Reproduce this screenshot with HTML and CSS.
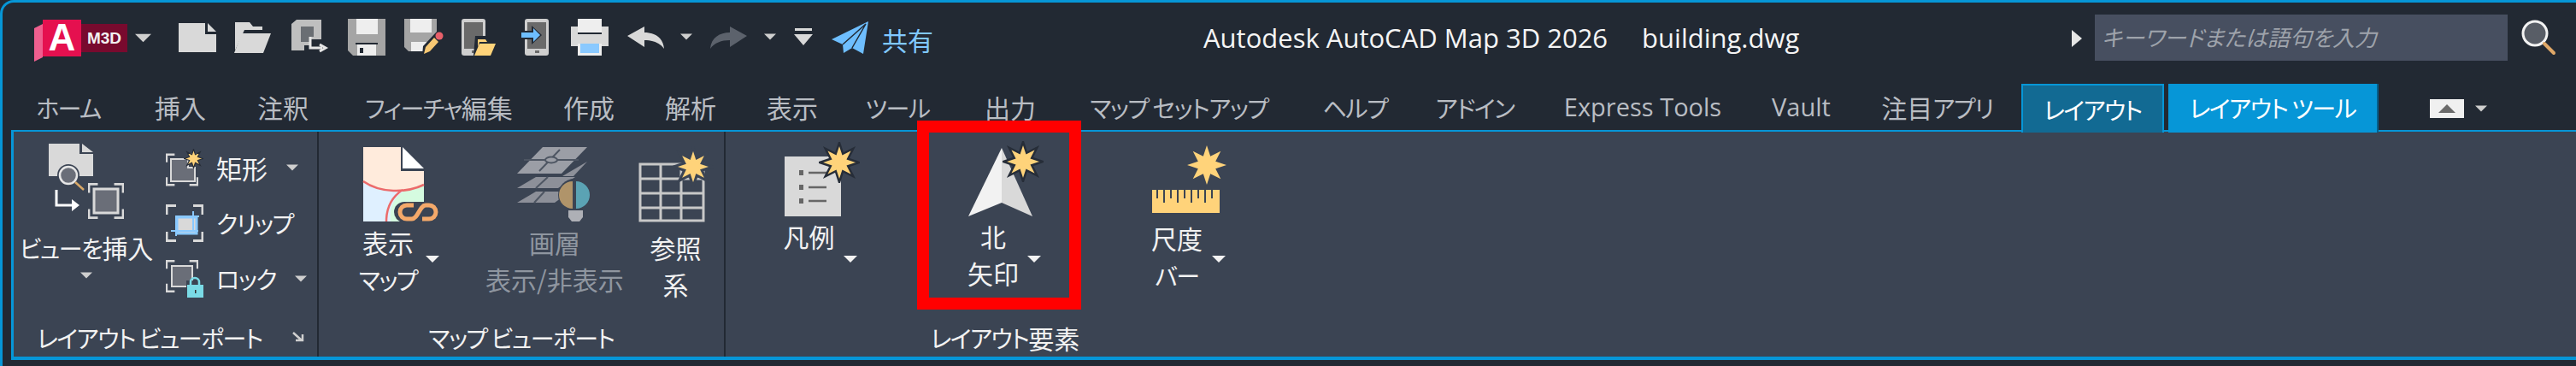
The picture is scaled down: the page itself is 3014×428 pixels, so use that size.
FILE: index.html
```html
<!DOCTYPE html>
<html lang="ja">
  <head>
    <meta charset="UTF-8" />
    <title>Autodesk AutoCAD Map 3D 2026 building.dwg</title>
    <link rel="stylesheet" href="styles.css">
  </head>
  <body>
    <svg class="defs" width="0" height="0">
      <symbol id="star" viewBox="0 0 48 48">
        <polygon points="24,1 28.200,13.800 40.300,7.700 34.200,19.800 47,24 34.200,28.200 40.300,40.300 28.200,34.200 24,47 19.800,34.200 7.700,40.300 13.800,28.200 1,24 13.800,19.800 7.700,7.700 19.800,13.800" fill="#ffd37a" />
      </symbol>
      <symbol id="tri" viewBox="0 0 16 8">
        <polygon points="0,0 16,0 8,8" fill="currentColor" />
      </symbol>
      <symbol id="frame" viewBox="0 0 44 44">
        <path d="M1 12V1.500H12M32 1.500H43V12M43 32V42.500H32M12 42.500H1V32" fill="none" stroke="#d9d9d9" stroke-width="3" />
      </symbol>
    </svg>

    <div class="window">
      <div class="titlebar">
        <div class="qat">
          <svg class="logo" width="110" height="50" viewBox="0 0 110 50">
            <polygon points="0,10 10,5 10,44 0,49" fill="#ef5f8f" />
            <rect x="10" y="0" width="45" height="43" fill="#e5104f" />
            <rect x="55" y="5" width="54" height="33" fill="#780a2e" />
            <text x="32.500" y="36" class="logo-a">A</text>
            <text x="82" y="28" class="logo-m">M3D</text>
          </svg>
          <svg class="tri logo-tri" width="19" height="11"><use href="#tri" /></svg>
          <svg class="new" width="44" height="34" viewBox="0 0 44 34">
            <path d="M0 0H31V13H44V34H0Z M34 0L44 10H34Z" fill="#d9d9d9" />
          </svg>
          <svg class="open" width="44" height="36" viewBox="0 0 44 36">
            <path d="M1 0H18L22 5H33V9H12L1 33Z" fill="#d9d9d9" />
            <path d="M9 13H43L34 36H0Z" fill="#d9d9d9" />
          </svg>
          <svg class="sync" width="42" height="40" viewBox="0 0 42 40">
            <path d="M0 5L6 0H35V23H21V30H15V36H0Z" fill="#bfbfbf" />
            <path d="M11 8H26V20H21V26H11Z" fill="#6a6e73" />
            <path d="M22 20V33H36M33 29L40 33L33 37" fill="none" stroke="#e6e6e6" stroke-width="3" />
          </svg>
          <svg class="save" width="44" height="43" viewBox="0 0 44 43">
            <path d="M0 0H44V43H6L0 37Z" fill="#a5a5a5" />
            <rect x="10" y="0" width="25" height="18" fill="#eeeeee" />
            <rect x="11" y="30" width="22" height="13" fill="#eeeeee" />
            <rect x="9" y="28" width="26" height="2" fill="#222933" />
            <rect x="14" y="34" width="4" height="6" fill="#222933" />
          </svg>
          <svg class="saveas" width="46" height="43" viewBox="0 0 46 43">
            <path d="M0 0H38V22L23 38H5L0 33Z" fill="#a5a5a5" />
            <rect x="7" y="0" width="25" height="16" fill="#eeeeee" />
            <rect x="8" y="27" width="18" height="11" fill="#eeeeee" />
            <path d="M22 32L38 15L45 22L29 39L21 43Z" fill="#222933" />
            <path d="M25 33L35 22L40 27L30 38L23 41Z" fill="#f7c873" />
            <circle cx="41" cy="20" r="4.500" fill="#e8606a" />
          </svg>
          <svg class="phone-open" width="40" height="43" viewBox="0 0 40 43">
            <rect x="0" y="0" width="28" height="43" rx="3" fill="#cfcfcf" />
            <rect x="3" y="4" width="22" height="31" fill="#6a6a6a" />
            <rect x="12" y="37" width="5" height="3" fill="#6a6a6a" />
            <path d="M16 20H30L33 25H40L34 43H14Z" fill="#222933" />
            <path d="M19 24H28L30 27H21L19 33Z" fill="#ffd37a" />
            <path d="M21 29H40L34 43H15Z" fill="#ffd37a" />
          </svg>
          <svg class="phone-in" width="33" height="43" viewBox="0 0 33 43">
            <rect x="5" y="0" width="28" height="43" rx="3" fill="#cfcfcf" />
            <rect x="8" y="4" width="22" height="31" fill="#6a6a6a" />
            <rect x="17" y="37" width="5" height="3" fill="#6a6a6a" />
            <path d="M0 14H13V8L25 19L13 30V24H0Z" fill="#222933" />
            <path d="M1 16H15V11L23 19L15 27V22H1Z" fill="#6ebeff" />
          </svg>
          <svg class="print" width="44" height="43" viewBox="0 0 44 43">
            <rect x="8" y="0" width="28" height="16" fill="#eeeeee" />
            <path d="M0 9H8V18H36V9H44V32H0Z" fill="#d9d9d9" />
            <rect x="0" y="20" width="44" height="12" fill="#d9d9d9" />
            <rect x="8" y="29" width="28" height="14" fill="#eeeeee" />
            <rect x="11" y="29" width="22" height="11" fill="#8ac9ff" />
          </svg>
          <svg class="undo" width="43" height="26" viewBox="0 0 43 26">
            <path d="M0 11L20 0V7C32 7 42 13 43 26C38 19 30 16 20 16V24Z" fill="#d9d9d9" />
          </svg>
          <svg class="tri small-tri undo-tri" width="14" height="8"><use href="#tri" /></svg>
          <svg class="redo" width="43" height="26" viewBox="0 0 43 26">
            <path d="M43 11L23 0V7C11 7 1 13 0 26C5 19 13 16 23 16V24Z" fill="#5c626c" />
          </svg>
          <svg class="tri small-tri redo-tri" width="14" height="8"><use href="#tri" /></svg>
          <svg class="menu" width="22" height="20" viewBox="0 0 22 20">
            <rect x="1" y="0" width="20" height="3" fill="#d9d9d9" />
            <polygon points="0,7 22,7 11,20" fill="#d9d9d9" />
          </svg>
          <svg class="send" width="43" height="38" viewBox="0 0 43 38">
            <path d="M0 21L43 0L37 38L24 31L14 37L13 27Z" fill="#6ebeff" />
            <path d="M13 27L40 3L24 31" fill="none" stroke="#222933" stroke-width="1.500" />
          </svg>
          <span class="share">共有</span>
        </div>
        <div class="title">Autodesk AutoCAD Map 3D 2026<span class="doc">building.dwg</span></div>
        <div class="search-wrap">
          <svg class="search-arrow" width="12" height="20" viewBox="0 0 12 20">
            <polygon points="0,0 12,10 0,20" fill="#e6e6e6" />
          </svg>
          <div class="search">キーワードまたは語句を入力</div>
          <svg class="glass" width="46" height="46" viewBox="0 0 46 46">
            <circle cx="16" cy="16" r="14" fill="#585d66" stroke="#f2f2f2" stroke-width="3" />
            <path d="M27 28L38 39" stroke="#e0a868" stroke-width="4" stroke-linecap="round" />
          </svg>
        </div>
      </div>

      <nav class="tabs">
        <span class="tab"><span class="ka">ホーム</span></span>
        <span class="tab">挿入</span>
        <span class="tab">注釈</span>
        <span class="tab"><span class="ka">フィーチャ</span>編集</span>
        <span class="tab">作成</span>
        <span class="tab">解析</span>
        <span class="tab">表示</span>
        <span class="tab"><span class="ka">ツール</span></span>
        <span class="tab">出力</span>
        <span class="tab"><span class="ka">マップ セットアップ</span></span>
        <span class="tab"><span class="ka">ヘルプ</span></span>
        <span class="tab"><span class="ka">アドイン</span></span>
        <span class="tab latin">Express Tools</span>
        <span class="tab latin">Vault</span>
        <span class="tab tab-apps">注目<span class="ka">アプリ</span></span>
        <span class="tab tab-layout"><span class="ka">レイアウト</span></span>
        <span class="tab tab-tools"><span class="ka">レイアウト ツール</span></span>
        <div class="collapse">
          <span class="collapse-btn"><svg width="20" height="10" viewBox="0 0 20 10"><polygon points="0,10 20,10 10,0" fill="#6a6a6a" /></svg></span>
          <svg class="tri" width="14" height="8"><use href="#tri" /></svg>
        </div>
      </nav>

      <div class="ribbon">
        <section class="group group-view">
          <div class="group-body">
            <div class="big big-insert">
              <svg width="90" height="88" viewBox="0 0 90 88">
                <path d="M0 0H36V12H52V38H0Z M39 0L52 10H39Z" fill="#d9d9d9" />
                <circle cx="23" cy="37" r="13" fill="#3b4453" />
                <circle cx="23" cy="37" r="10" fill="#6a6e78" stroke="#e6e6e6" stroke-width="2.500" />
                <path d="M31 45L41 54" stroke="#d8a868" stroke-width="2.500" />
                <path d="M9 54V72H28" fill="none" stroke="#ffffff" stroke-width="3" />
                <polygon points="27,65 36,72 27,79" fill="#ffffff" />
                <use href="#frame" x="46" y="46" width="42" height="42" />
                <rect x="53" y="53" width="28" height="28" fill="#6a6e78" stroke="#d9d9d9" stroke-width="3" />
              </svg>
              <span class="big-label"><span class="ka">ビューを</span>挿入</span>
              <svg class="tri small-tri insert-tri" width="14" height="8"><use href="#tri" /></svg>
            </div>
            <div class="small-col">
              <div class="small">
                <svg width="44" height="44" viewBox="0 0 44 44">
                  <use href="#frame" x="0" y="5" width="38" height="39" />
                  <path d="M6 12H26V22H34V38H6Z" fill="#6a6e78" stroke="#d9d9d9" stroke-width="2" />
                  <use href="#star" class="outlined" x="21" y="0" width="23" height="23" />
                </svg>
                <span>矩形</span>
                <svg class="tri small-tri" width="14" height="8"><use href="#tri" /></svg>
              </div>
              <div class="small">
                <svg width="44" height="44" viewBox="0 0 44 44">
                  <use href="#frame" x="0" y="0" width="44" height="44" />
                  <rect x="13" y="15" width="23" height="19" fill="#d9d9d9" stroke="#8ac9ff" stroke-width="3" />
                  <path d="M6 31H38M12 37V14H39M32 8V32" fill="none" stroke="#8ac9ff" stroke-width="2" />
                </svg>
                <span class="ka">クリップ</span>
              </div>
              <div class="small">
                <svg width="44" height="44" viewBox="0 0 44 44">
                  <use href="#frame" x="0" y="0" width="38" height="38" />
                  <rect x="7" y="7" width="24" height="24" fill="#6a6e78" stroke="#d9d9d9" stroke-width="2" />
                  <rect x="24" y="24" width="20" height="20" fill="#3b4453" />
                  <path d="M29 29V26A5 5 0 0 1 39 26V29" fill="none" stroke="#7adbe6" stroke-width="2.500" />
                  <rect x="25" y="29" width="19" height="15" fill="#7adbe6" />
                  <rect x="34" y="35" width="1.500" height="4" fill="#333" />
                </svg>
                <span class="ka">ロック</span>
                <svg class="tri small-tri" width="14" height="8"><use href="#tri" /></svg>
              </div>
            </div>
          </div>
          <div class="group-title title-view"><span class="ka">レイアウト ビューポート</span>
            <svg class="launcher" width="13" height="12" viewBox="0 0 13 12">
              <path d="M1 1L11 10M4 10H12V3" fill="none" stroke="#cfcfcf" stroke-width="2.500" />
            </svg>
          </div>
        </section>

        <section class="group group-map">
          <div class="group-body">
            <div class="big big-map">
              <svg width="88" height="88" viewBox="0 -2 88 88">
                <path d="M0 0H44V28H71V87H0Z" fill="#ffebdc" />
                <path d="M0 41C20 54 50 54 71 44V87H0Z" fill="#dff0ff" />
                <path d="M32 87C30 70 36 58 50 50C58 47 65 46 71 44V87Z" fill="#d5fbe0" />
                <path d="M0 40C20 54 50 54 71 44M27 87C27 70 34 58 46 50" fill="none" stroke="#ec6b6b" stroke-width="2.500" />
                <path d="M46 0L71 25H46Z" fill="#ffffff" />
                <rect x="36" y="64" width="52" height="24" rx="12" fill="#3b4453" />
                <path d="M59 68H51A8 8 0 0 0 51 84H57C64 84 66 68 73 68H77A8 8 0 0 1 77 84H69" fill="none" stroke="#f4a96a" stroke-width="5" />
              </svg>
              <span class="big-label">表示<br /><span class="ka">マップ</span></span>
              <svg class="tri big-tri" width="16" height="8"><use href="#tri" /></svg>
            </div>
            <div class="big big-layer is-dim">
              <svg width="86" height="90" viewBox="0 0 86 90">
                <polygon points="2,67 24,54 64,54 46,67" fill="#8d9099" />
                <polygon points="2,50 24,37 70,37 50,50" fill="#8d9099" />
                <polygon points="55,36 84,19 68,36" fill="#8d9099" />
                <polygon points="32,2 84,2 54,33 2,33" fill="#9b9ea6" />
                <path d="M28 30L52 5M10 17H74M24 50L38 37M22 67L34 54" fill="none" stroke="#4e5663" stroke-width="2" />
                <ellipse cx="42" cy="17" rx="7" ry="3.500" fill="#9b9ea6" stroke="#4e5663" stroke-width="2" />
                <circle cx="69" cy="58" r="19" fill="#3b4453" />
                <path d="M67 42A16 16 0 0 0 67 74Z" fill="#b0946a" />
                <path d="M71 42A16 16 0 0 1 71 74Z" fill="#5ba3b4" />
                <path d="M62 76H79V84L75 89H66L62 84Z" fill="#aeb0b6" />
              </svg>
              <span class="big-label">画層<br />表示/非表示</span>
            </div>
            <div class="big big-crs">
              <svg width="88" height="88" viewBox="0 0 88 88">
                <path d="M2 22H76V88H2Z M2 39H76M2 56H76M2 73H76M26 22V88M50 22V88" fill="none" stroke="#c8c8c8" stroke-width="3" />
                <use href="#star" class="cutout" x="40" y="1" width="48" height="48" />
              </svg>
              <span class="big-label">参照<br />系</span>
            </div>
          </div>
          <div class="group-title"><span class="ka">マップ ビューポート</span></div>
        </section>

        <section class="group group-layout">
          <div class="group-body">
            <div class="big big-legend">
              <svg width="90" height="88" viewBox="0 0 90 88">
                <rect x="2" y="13" width="66" height="70" fill="#d9d9d9" />
                <path d="M19 29h5v6h-5zM19 46h5v6h-5zM19 62h5v6h-5z" fill="#666" />
                <path d="M30 32H51M30 49H51M30 65H51" stroke="#666" stroke-width="2.500" />
                <use href="#star" class="outlined" x="42" y="-4" width="48" height="48" />
              </svg>
              <span class="big-label"><span>凡例</span></span>
              <svg class="tri big-tri" width="16" height="8"><use href="#tri" /></svg>
            </div>
            <div class="big big-north">
              <svg width="90" height="88" viewBox="0 0 90 88">
                <polygon points="39,3 0,83 39,67" fill="#f2f2f2" />
                <polygon points="39,3 75,83 39,67" fill="#d9d9d9" />
                <use href="#star" class="outlined" x="40" y="-5" width="48" height="48" />
              </svg>
              <span class="big-label">北<br />矢印</span>
              <svg class="tri big-tri" width="16" height="8"><use href="#tri" /></svg>
            </div>
            <div class="big big-scale">
              <svg width="90" height="88" viewBox="0 0 90 88">
                <path d="M0 52H79V79H0Z" fill="#ffd37a" />
                <path d="M6 52V62M14 52V67M22 52V62M30 52V67M38 52V62M46 52V67M54 52V62M62 52V67M70 52V62" stroke="#3b4453" stroke-width="2" />
                <use href="#star" x="40" y="-1" width="48" height="48" />
              </svg>
              <span class="big-label">尺度<br /><span class="ka">バー</span></span>
              <svg class="tri big-tri" width="16" height="8"><use href="#tri" /></svg>
            </div>
          </div>
          <div class="group-title"><span class="ka">レイアウト</span>要素</div>
        </section>
      </div>
    </div>

    <div class="callout"></div>
  </body>
</html>
```

FILE: styles.css
```css
* {
  box-sizing: border-box;
}

body {
  margin: 0;
  background-color: #222933;
  color: #f2f2f2;
  font-family: "Noto Sans CJK JP", "Noto Sans", sans-serif;
  font-size: 30px;
  line-height: 43px;
  overflow: hidden;
}

.defs {
  position: absolute;
}

svg {
  display: block;
  flex: none;
  overflow: visible;
}

/* kana run narrower and smaller than kanji */
.ka {
  font-size: 28px;
  font-feature-settings: "palt";
  letter-spacing: -1.500px;
}

.outlined {
  stroke: #262d38;
  stroke-width: 2.500;
}

.cutout {
  stroke: #3b4453;
  stroke-width: 3;
}

.window {
  height: 428px;
  padding-bottom: 7px;
  border-top: 3px solid #0696d7;
  border-left: 3px solid #0696d7;
  border-top-left-radius: 16px;
}

.tri {
  color: #cfcfcf;
}

/* title bar */
.titlebar {
  display: flex;
  align-items: flex-start;
  height: 95px;
}

.qat {
  display: flex;
  align-items: flex-start;
  width: 1357px;
  padding: 20px 0 0 37px;
}

.logo-a {
  fill: #ffffff;
  font-family: "Liberation Sans", sans-serif;
  font-size: 44px;
  font-weight: 700;
  text-anchor: middle;
}

.logo-m {
  fill: #f2f2f2;
  font-family: "Liberation Sans", sans-serif;
  font-size: 19px;
  font-weight: 700;
  text-anchor: middle;
}

.logo-tri {
  margin: 16px 0 0 8px;
}

.new { margin: 4px 0 0 32px; }
.open { margin: 3px 0 0 21px; }
.sync { margin: 0 0 0 23px; }
.save { margin: -1px 0 0 24px; }
.saveas { margin: -1px 0 0 22px; }
.phone-open { margin: -1px 0 0 21px; }
.phone-in { margin: -1px 0 0 29px; }
.print { margin: -1px 0 0 26px; }
.undo { margin: 8px 0 0 22px; }
.undo-tri { margin: 16px 0 0 19px; }
.redo { margin: 8px 0 0 21px; }
.redo-tri { margin: 16px 0 0 20px; }
.menu { margin: 10px 0 0 21px; }
.send { margin: 2px 0 0 22px; }

.share {
  margin: 2px 0 0 16px;
  color: #80c8ff;
}

.title {
  width: 1064px;
  padding: 20px 0 0 48px;
  color: #f5f5f5;
  font-family: "Open Sans", sans-serif;
  font-size: 31px;
  white-space: nowrap;
}

.doc {
  margin-left: 40px;
}

.search-wrap {
  display: flex;
  align-items: flex-start;
}

.search-arrow {
  margin: 32px 0 0 0;
}

.search {
  width: 483px;
  height: 54px;
  margin: 14px 0 0 15px;
  padding-left: 8px;
  background-color: #474f60;
  color: #9ea3ab;
  font-size: 26px;
  font-feature-settings: "palt";
  font-style: italic;
  line-height: 52px;
  white-space: nowrap;
}

.glass {
  margin: 20px 0 0 16px;
}

/* tabs */
.tabs {
  display: grid;
  grid-template-columns: 154px 108px 132px 233px 118px 120px 118px 128px 136px 259px 153px 127px 266px 105px 205px 172px 246px 1fr;
  align-items: start;
  height: 54px;
  color: #b9bdc3;
  text-align: center;
  white-space: nowrap;
}

.tab {
  height: 100%;
  line-height: 54px;
}

.latin {
  font-family: "Open Sans", sans-serif;
  font-size: 29px;
}

.tab-apps {
  padding-left: 8px;
}

.tab-layout {
  margin-right: 5px;
  border: 2px solid #0696d7;
  border-bottom: 0;
  background-color: #126a93;
  color: #ffffff;
}

.tab-tools {
  border-right: 2px solid #055f8a;
  background-color: #0696d7;
  color: #ffffff;
}

.collapse {
  display: flex;
  align-items: center;
  gap: 13px;
  padding: 18px 0 0 60px;
}

.collapse-btn {
  display: flex;
  align-items: center;
  justify-content: center;
  width: 40px;
  height: 22px;
  background-color: #f0f0f0;
}

/* ribbon */
.ribbon {
  display: flex;
  height: 269px;
  margin-left: 10px;
  border-top: 2px solid #0696d7;
  border-bottom: 4px solid #0696d7;
  border-left: 3px solid #0696d7;
  background-color: #3b4453;
}

.group {
  display: flex;
  flex: none;
  flex-direction: column;
  border-right: 2px solid #222933;
}

.group-view { width: 357px; }
.group-map { width: 476px; }
.group-layout { width: 654px; border-right: 0; }

.group-body {
  display: flex;
  height: 224px;
}

.group-title {
  display: flex;
  justify-content: center;
  align-items: center;
  position: relative;
  height: 34px;
}

.title-view {
  padding-right: 37px;
}

.launcher {
  position: absolute;
  right: 16px;
  top: 10px;
}

.big {
  display: flex;
  position: relative;
  flex: none;
  flex-direction: column;
  padding-top: 16px;
  text-align: center;
}

.big-label {
  margin-top: 4px;
  align-self: center;
  white-space: nowrap;
}

.is-dim {
  color: #8f96a0;
}

.big-tri {
  position: absolute;
  top: 145px;
  color: #f2f2f2;
}

.big-insert { width: 170px; }
.big-insert > svg:first-child { margin: -2px 0 0 41px; }
.big-insert .big-label { margin-top: 12px; }

.big-map { width: 160px; margin-left: 1px; }
.big-map > svg:first-child { margin-left: 51px; }
.big-map .big-tri { left: 124px; }

.big-layer { width: 196px; margin-left: 17px; }
.big-layer > svg:first-child { margin: 0 0 -2px 52px; }

.big-crs { width: 87px; }
.big-crs .big-label { margin-top: 10px; }

.big-legend { width: 119px; margin-left: 38px; }
.big-legend > svg:first-child { margin-left: 29px; }
.big-legend .big-label { margin-top: -3px; }
.big-legend .big-tri { left: 100px; }

.big-north { width: 120px; margin-left: 96px; }
.big-north > svg:first-child { margin-left: 31px; }
.big-north .big-label { margin-top: -3px; }
.big-north .big-tri { left: 100px; }

.big-scale { width: 120px; margin-left: 95px; }
.big-scale > svg:first-child { margin-left: 31px; }
.big-scale .big-label { margin-top: -1px; }
.big-scale .big-tri { left: 101px; }

.insert-tri {
  align-self: center;
  margin-top: 6px;
}

.small-col {
  display: flex;
  flex-direction: column;
  gap: 21px;
  padding: 20px 0 0 8px;
}

.small {
  display: flex;
  align-items: center;
  gap: 15px;
  height: 44px;
}

.small .tri {
  margin-left: 7px;
}

/* red box drawn over the screenshot */
.callout {
  position: absolute;
  left: 1073px;
  top: 141px;
  width: 192px;
  height: 221px;
  border: 14px solid #ff0000;
}
```
